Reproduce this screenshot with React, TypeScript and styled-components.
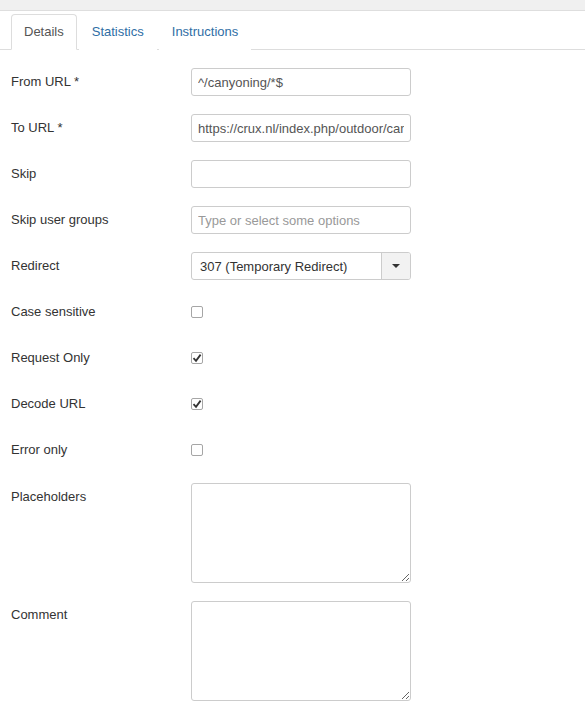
import styled, { createGlobalStyle } from "styled-components";

const GlobalStyle = createGlobalStyle`
  body {
    margin: 0;
    background: #fff;
    font-family: "Liberation Sans", Arial, sans-serif;
    font-size: 13px;
    color: #333;
  }
`;

const TopStrip = styled.div`
  height: 10px;
  background: #f0f0f0;
  border-bottom: 1px solid #dedede;
`;

const TabBar = styled.ul`
  list-style: none;
  margin: 3px 0 0;
  padding: 0 0 0 11px;
  display: flex;
  border-bottom: 1px solid #ddd;
`;

const Tab = styled.li<{ $active?: boolean }>`
  margin: 0 2px -1px 0;
  padding: 8px 12px;
  line-height: 18px;
  border: 1px solid ${(p) => (p.$active ? "#ddd" : "transparent")};
  border-bottom-color: ${(p) => (p.$active ? "#fff" : "transparent")};
  border-radius: 4px 4px 0 0;
  background: #fff;
  color: ${(p) => (p.$active ? "#555" : "#2f6ea5")};
`;

const Form = styled.div`
  padding: 18px 0 0 11px;
`;

const Row = styled.div<{ $top?: boolean }>`
  display: flex;
  align-items: ${(p) => (p.$top ? "flex-start" : "center")};
  min-height: 28px;
  margin-bottom: ${(p) => (p.$top ? "17px" : "18px")};
`;

const Label = styled.label<{ $top?: boolean }>`
  width: 180px;
  flex-shrink: 0;
  padding-top: ${(p) => (p.$top ? "8px" : "0")};
  margin-top: -1px;
  color: #333;
`;

const Input = styled.input`
  box-sizing: border-box;
  width: 220px;
  height: 28px;
  padding: 4px 6px;
  border: 1px solid #ccc;
  border-radius: 3px;
  font: 13px "Liberation Sans", Arial, sans-serif;
  color: #555;
  background: #fff;
  outline: none;
  &::placeholder {
    color: #999;
  }
`;

const SelectBox = styled.div`
  box-sizing: border-box;
  width: 220px;
  height: 28px;
  display: flex;
  border: 1px solid #ccc;
  border-radius: 3px;
  overflow: hidden;
`;

const SelectValue = styled.div`
  flex: 1;
  padding: 0 8px;
  display: flex;
  align-items: center;
  color: #333;
`;

const SelectToggle = styled.div`
  width: 28px;
  display: flex;
  align-items: center;
  justify-content: center;
  background: #f2f2f2;
  border-left: 1px solid #ccc;
`;

const Caret = styled.span`
  width: 0;
  height: 0;
  border-left: 4px solid transparent;
  border-right: 4px solid transparent;
  border-top: 4px solid #333;
`;

const Check = styled.span`
  box-sizing: border-box;
  width: 12px;
  height: 12px;
  border: 1px solid #a6a6a6;
  border-radius: 2px;
  background: #fff;
  display: flex;
  align-items: center;
  justify-content: center;
`;

const TextArea = styled.textarea`
  box-sizing: border-box;
  width: 220px;
  height: 100px;
  margin: 1px 0 0;
  border: 1px solid #ccc;
  border-radius: 3px;
  padding: 4px 6px;
  font: 13px "Liberation Sans", Arial, sans-serif;
  outline: none;
`;

function Checkbox({ checked }: { checked?: boolean }) {
  return (
    <Check>
      {checked && (
        <svg width="10" height="10" viewBox="0 0 10 10">
          <path d="M1.5 5.2 L4 7.8 L8.6 1.6" fill="none" stroke="#333" strokeWidth="1.8" />
        </svg>
      )}
    </Check>
  );
}

export default function App() {
  return (
    <>
      <GlobalStyle />
      <TopStrip />
      <TabBar>
        <Tab $active>Details</Tab>
        <Tab>Statistics</Tab>
        <Tab>Instructions</Tab>
      </TabBar>
      <Form>
        <Row>
          <Label>From URL *</Label>
          <Input defaultValue="^/canyoning/*$" />
        </Row>
        <Row>
          <Label>To URL *</Label>
          <Input defaultValue="https://crux.nl/index.php/outdoor/canyoning" />
        </Row>
        <Row>
          <Label>Skip</Label>
          <Input />
        </Row>
        <Row>
          <Label>Skip user groups</Label>
          <Input placeholder="Type or select some options" />
        </Row>
        <Row>
          <Label>Redirect</Label>
          <SelectBox>
            <SelectValue>307 (Temporary Redirect)</SelectValue>
            <SelectToggle>
              <Caret />
            </SelectToggle>
          </SelectBox>
        </Row>
        <Row>
          <Label>Case sensitive</Label>
          <Checkbox />
        </Row>
        <Row>
          <Label>Request Only</Label>
          <Checkbox checked />
        </Row>
        <Row>
          <Label>Decode URL</Label>
          <Checkbox checked />
        </Row>
        <Row>
          <Label>Error only</Label>
          <Checkbox />
        </Row>
        <Row $top>
          <Label $top>Placeholders</Label>
          <TextArea />
        </Row>
        <Row $top>
          <Label $top>Comment</Label>
          <TextArea />
        </Row>
      </Form>
    </>
  );
}
